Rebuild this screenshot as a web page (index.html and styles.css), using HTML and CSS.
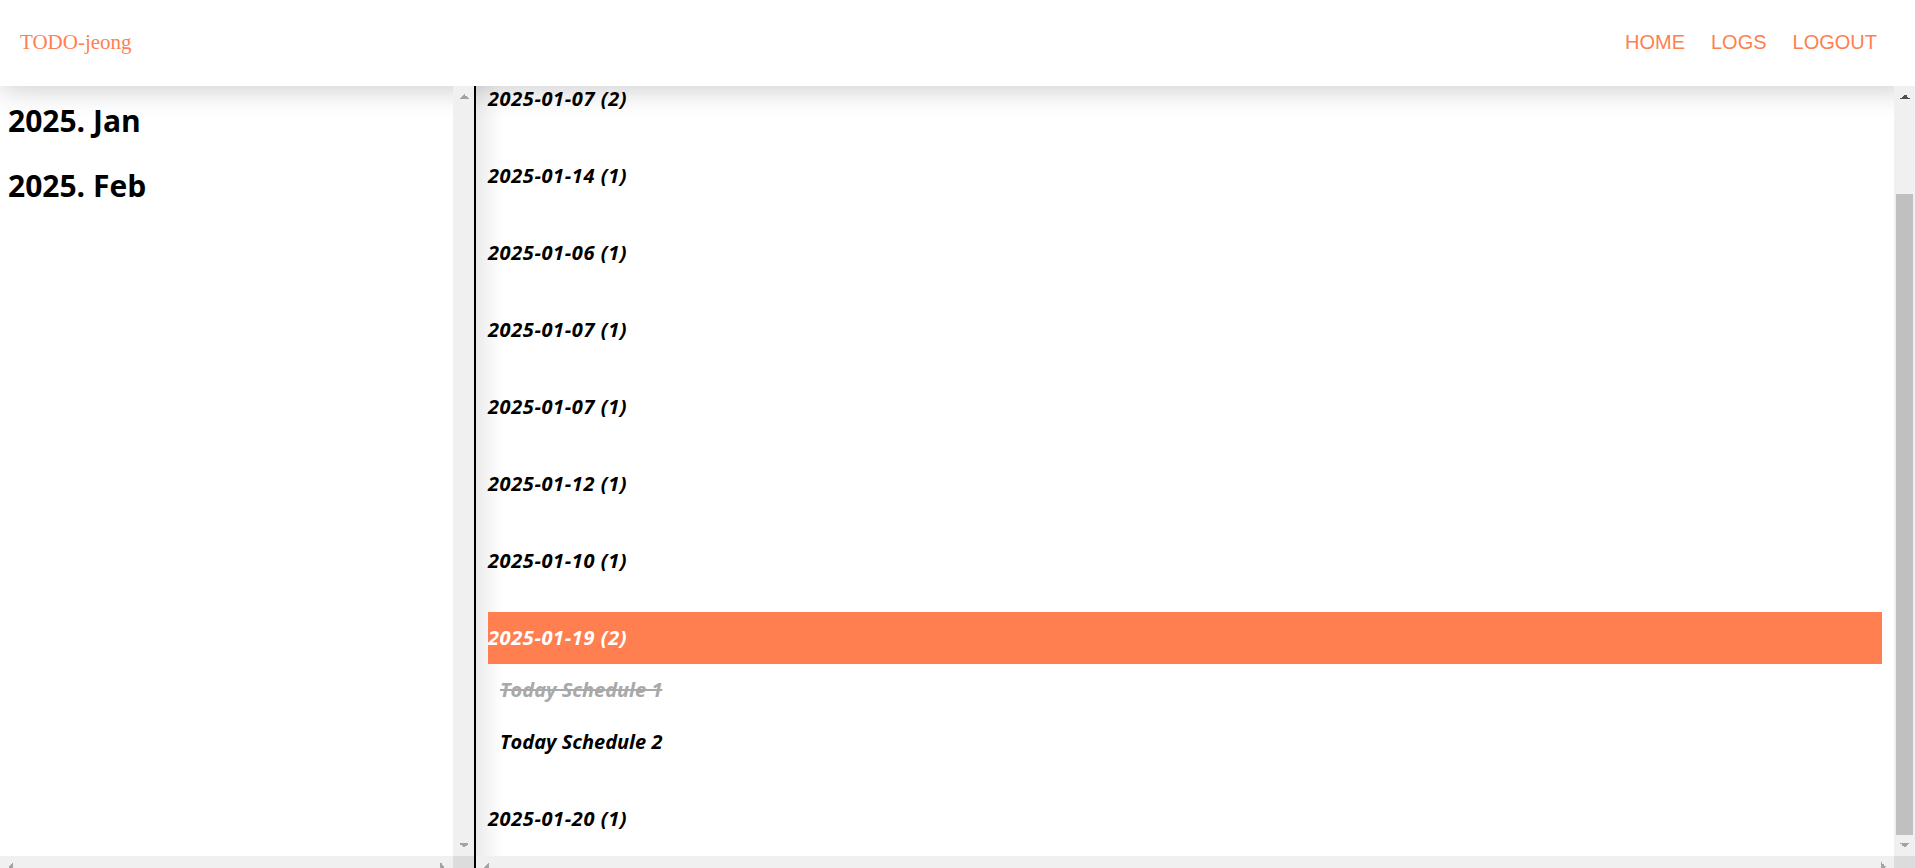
FILE: index.html
```html
<!DOCTYPE html>
<html lang="en">
<head>
<meta charset="utf-8">
<title>TODO-jeong</title>
<link rel="stylesheet" href="styles.css">
</head>
<body>
<header class="topbar">
  <a class="logo" href="#">TODO-jeong</a>
  <nav class="nav">
    <a href="#">HOME</a>
    <a href="#">LOGS</a>
    <a href="#">LOGOUT</a>
  </nav>
</header>
<main class="main">
  <aside class="pane pane-left">
    <div class="view months">
      <h2 class="month">2025. Jan</h2>
      <h2 class="month">2025. Feb</h2>
    </div>
    <div class="vbar">
      <span class="sb-btn up"></span>
      <span class="sb-track"></span>
      <span class="sb-btn down"></span>
    </div>
    <div class="hbar">
      <span class="sb-btn left"></span>
      <span class="sb-track"></span>
      <span class="sb-btn right"></span>
    </div>
    <div class="sb-corner"></div>
  </aside>
  <section class="pane pane-right">
    <div class="view days" id="days">
      <div class="day"><div class="day-head">2025-01-07 (2)</div></div>
      <div class="day"><div class="day-head">2025-01-14 (1)</div></div>
      <div class="day"><div class="day-head">2025-01-06 (1)</div></div>
      <div class="day"><div class="day-head">2025-01-07 (1)</div></div>
      <div class="day"><div class="day-head">2025-01-07 (1)</div></div>
      <div class="day"><div class="day-head">2025-01-12 (1)</div></div>
      <div class="day"><div class="day-head">2025-01-10 (1)</div></div>
      <div class="day open">
        <div class="day-head">2025-01-19 (2)</div>
        <ul class="todos">
          <li class="todo done">Today Schedule 1</li>
          <li class="todo">Today Schedule 2</li>
        </ul>
      </div>
      <div class="day"><div class="day-head">2025-01-20 (1)</div></div>
    </div>
    <div class="vbar">
      <span class="sb-btn up active"></span>
      <span class="sb-track thumbed"><span class="sb-thumb"></span></span>
      <span class="sb-btn down"></span>
    </div>
    <div class="hbar">
      <span class="sb-btn left"></span>
      <span class="sb-track"></span>
      <span class="sb-btn right"></span>
    </div>
    <div class="sb-corner"></div>
  </section>
</main>
<script src="script.js"></script>
</body>
</html>
```
FILE: styles.css
```css
html, body {
  margin: 0;
  padding: 0;
  height: 100%;
  overflow: hidden;
  background: #fff;
}

.topbar {
  height: 86px;
  display: flex;
  align-items: center;
  justify-content: space-between;
  padding: 0 38px 0 20px;
  box-sizing: border-box;
  background: #fff;
  box-shadow: 0 2px 30px rgba(0, 0, 0, 0.22);
}

.logo {
  font-family: "Liberation Serif", "Times New Roman", serif;
  font-size: 21px;
  color: #ff7f50;
  text-decoration: none;
  margin-bottom: 2px;
}

.nav {
  display: flex;
  gap: 26px;
  margin-bottom: 2px;
}

.nav a {
  font-family: "Liberation Sans", Arial, sans-serif;
  font-size: 20px;
  color: #ff7f50;
  text-decoration: none;
}

.main {
  display: flex;
  height: 791px;
}

.pane {
  display: grid;
  grid-template-columns: minmax(0, 1fr) 21px;
  grid-template-rows: minmax(0, 1fr) 21px;
  height: 791px;
  box-sizing: border-box;
}

.pane-left {
  width: 476px;
  flex: none;
  border-right: 2px solid #000;
}

.pane-right {
  flex: 1;
  min-width: 0;
}

.view {
  overflow: hidden;
  min-height: 0;
}

.months {
  padding: 15px 8px 0;
  display: flex;
  flex-direction: column;
  gap: 25px;
}

.month {
  margin: 0;
  font-family: "Open Sans", "Noto Sans", sans-serif;
  font-weight: 700;
  font-size: 30px;
  line-height: 40px;
  color: #000;
}

.days {
  padding: 0 12px;
  background: linear-gradient(to right, rgba(0, 0, 0, 0.08), rgba(0, 0, 0, 0) 26px);
}

.day {
  padding: 12px 0 13px;
}

.day-head,
.todo {
  height: 52px;
  line-height: 52px;
  font-family: "Open Sans", "Noto Sans", sans-serif;
  font-style: italic;
  font-weight: 700;
  font-size: 20px;
  color: #000;
  white-space: nowrap;
}

.day-head {
  letter-spacing: 0.6px;
}

.open .day-head {
  background: #ff7f50;
  color: #fff;
}

.todos {
  list-style: none;
  margin: 0;
  padding: 0 12px;
}

.todo.done {
  color: #a9a9a9;
  text-decoration: line-through;
}

/* drawn scrollbars */
.vbar {
  display: flex;
  flex-direction: column;
  background: #f0f0f0;
  min-height: 0;
}

.hbar {
  display: flex;
  background: #f0f0f0;
  min-width: 0;
}

.sb-corner {
  background: #dcdcdc;
}

.sb-track {
  flex: 1;
}

.sb-track.thumbed {
  display: flex;
  padding: 87px 2px 0;
}

.sb-thumb {
  flex: 1;
  background: #c0c0c0;
}

.sb-btn {
  flex: none;
  width: 21px;
  height: 21px;
  background-repeat: no-repeat;
  background-size: 5px 5px, 5px 5px;
}

.sb-btn.up {
  background-image:
    linear-gradient(to bottom right, transparent 50%, #a3a3a3 50%),
    linear-gradient(to bottom left, transparent 50%, #a3a3a3 50%);
  background-position: 6px 8px, 11px 8px;
}

.sb-btn.up.active {
  background-image:
    linear-gradient(to bottom right, transparent 50%, #505050 50%),
    linear-gradient(to bottom left, transparent 50%, #505050 50%);
}

.sb-btn.down {
  background-image:
    linear-gradient(to top right, transparent 50%, #a3a3a3 50%),
    linear-gradient(to top left, transparent 50%, #a3a3a3 50%);
  background-position: 6px 8px, 11px 8px;
}

.sb-btn.left {
  background-image:
    linear-gradient(to bottom right, transparent 50%, #a3a3a3 50%),
    linear-gradient(to top right, transparent 50%, #a3a3a3 50%);
  background-position: 8px 6px, 8px 11px;
}

.sb-btn.right {
  background-image:
    linear-gradient(to bottom left, transparent 50%, #a3a3a3 50%),
    linear-gradient(to top left, transparent 50%, #a3a3a3 50%);
  background-position: 8px 6px, 8px 11px;
}
```
FILE: script.js
```js
var days = document.getElementById('days');
days.scrollTop = Math.max(0, days.scrollHeight - days.clientHeight - 2);
```
